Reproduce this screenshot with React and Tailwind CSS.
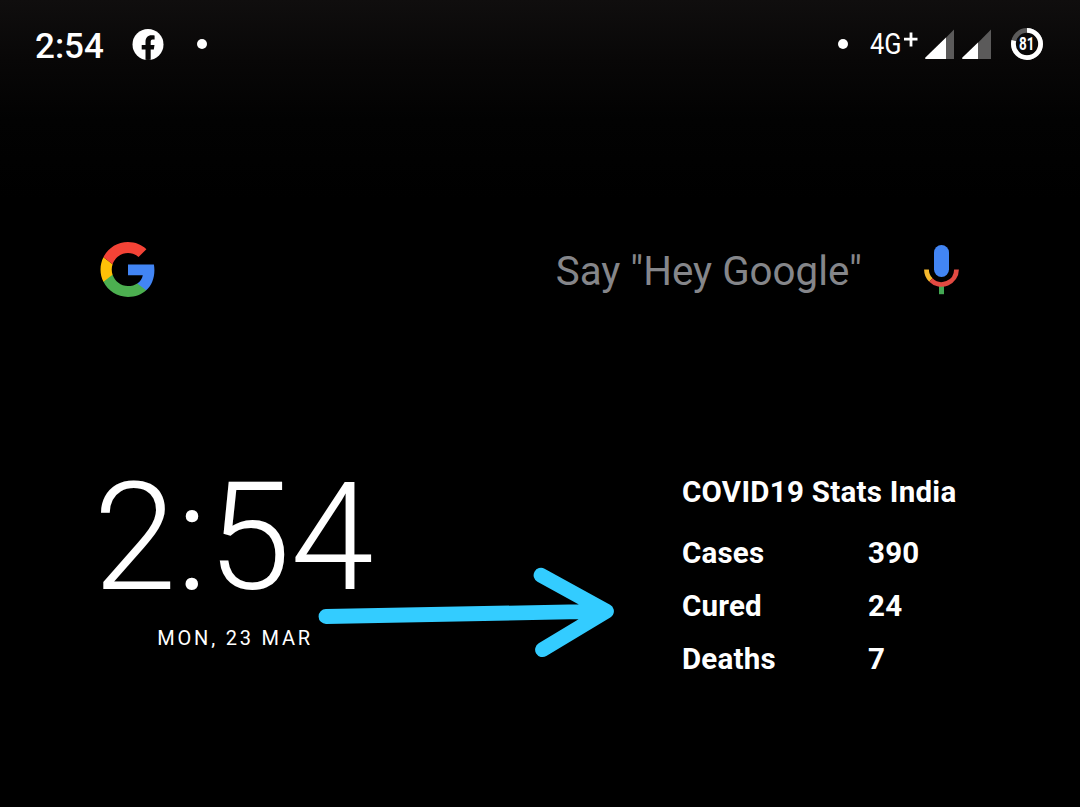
import React from "react";

const stats = [
  ["Cases", "390"],
  ["Cured", "24"],
  ["Deaths", "7"],
];

function FacebookBadge() {
  return (
    <svg className="h-8 w-8" viewBox="0 0 32 32">
      <defs>
        <clipPath id="badge">
          <circle cx="16" cy="16.5" r="15.5" />
        </clipPath>
      </defs>
      <circle cx="16" cy="16.5" r="15.5" fill="#fff" />
      <path
        clipPath="url(#badge)"
        d="M13.5 32V21.6H9.7V17.1H13.5V13.8C13.5 9.6 15.7 7.2 19.6 7.2C20.8 7.2 21.8 7.3 22.6 7.5V11.4H20.6C19 11.4 18.7 12.4 18.7 13.7V17.1H22.5L21.8 21.6H18.7V32Z"
        fill="#0a0909"
      />
    </svg>
  );
}

function Signal({ level }) {
  return (
    <svg className="h-[30px] w-[30px]" viewBox="0 0 30 30">
      <path d="M29 0.4V30H0Z" fill="#5b5a5a" />
      <path
        d={`M${level} ${29.6 - level}V30H1.2Q-0.6 29.8 0.4 28.6Z`}
        fill="#fff"
      />
    </svg>
  );
}

function Battery() {
  return (
    <svg className="h-8 w-8" viewBox="0 0 32 32">
      <circle cx="16" cy="16" r="13.6" fill="none" stroke="#5b5a5a" strokeWidth="4.8" />
      <circle
        cx="16"
        cy="16"
        r="13.6"
        fill="none"
        stroke="#fff"
        strokeWidth="4.8"
        pathLength="100"
        strokeDasharray="79 21"
        transform="rotate(-90 16 16)"
      />
      <text x="15.8" y="22.2" textAnchor="middle" textLength="15.5" lengthAdjust="spacingAndGlyphs" fontSize="17.5" fontWeight="700" fill="#fff">
        81
      </text>
    </svg>
  );
}

function StatusBar() {
  return (
    <header className="flex h-[88px] items-center justify-between pl-[35px] pr-[37px]">
      <div className="flex items-center">
        <span className="w-[97px] pt-[5px] text-[35px] leading-none font-medium">2:54</span>
        <FacebookBadge />
        <span className="ml-[33px] h-[10px] w-[10px] rounded-full bg-white" />
      </div>
      <div className="flex items-center">
        <span className="mr-[22px] h-[10px] w-[10px] rounded-full bg-white" />
        <svg className="mr-[6px] h-8 w-[49px]" viewBox="0 0 49 32">
          <text x="0" y="25.8" textLength="31.5" lengthAdjust="spacingAndGlyphs" fontSize="29.5" fill="#fff">
            4G
          </text>
          <path d="M41 4.5V18.5M34 11.2H47.5" stroke="#fff" strokeWidth="2.8" />
        </svg>
        <Signal level={21} />
        <span className="w-[7px]" />
        <Signal level={16} />
        <span className="w-[19px]" />
        <Battery />
      </div>
    </header>
  );
}

function GoogleLogo() {
  return (
    <svg className="h-[60px] w-[60px]" viewBox="0 0.2 24 24">
      <path fill="#4285F4" d="M22.56 12.25c0-.78-.07-1.53-.2-2.25H12v4.26h5.92c-.26 1.37-1.04 2.53-2.21 3.31v2.77h3.57c2.08-1.92 3.28-4.74 3.28-8.09z" />
      <path fill="#4CAF50" d="M12 23c2.97 0 5.46-.98 7.28-2.66l-3.57-2.77c-.98.66-2.23 1.06-3.71 1.06-2.86 0-5.29-1.93-6.16-4.53H2.18v2.84C3.99 20.53 7.7 23 12 23z" />
      <path fill="#FFC107" d="M5.84 14.09c-.22-.66-.35-1.36-.35-2.09s.13-1.43.35-2.09L2.18 7.07C1.43 8.55 1 10.22 1 12s.43 3.45 1.18 4.93l2.85-2.22.81-.62z" />
      <path fill="#F44336" d="M12 5.38c1.62 0 3.06.56 4.21 1.64l3.15-3.15C17.45 2.09 14.97 1 12 1 7.7 1 3.99 3.47 2.18 7.07l3.66 2.84c.87-2.6 3.3-4.53 6.16-4.53z" />
    </svg>
  );
}

function Mic() {
  return (
    <svg className="h-[50px] w-[36px]" viewBox="0 0 36 50">
      <path d="M17.5 40V49.2" stroke="#43A853" strokeWidth="5" />
      <path d="M2.5 24.4A15 15 0 0 0 6.9 35" fill="none" stroke="#F5B92E" strokeWidth="4.8" />
      <path d="M6.9 35A15 15 0 0 0 32.5 24.4" fill="none" stroke="#E24A42" strokeWidth="4.8" />
      <rect x="10" y="0" width="15" height="32" rx="7.5" fill="#4285F4" />
    </svg>
  );
}

function SearchBar() {
  return (
    <div className="flex h-[60px] items-center pr-[120px] pl-[98.4px]">
      <GoogleLogo />
      <span className="ml-auto pt-[4px] text-[40.3px] leading-none whitespace-nowrap text-[#85868a]">
        Say "Hey Google"
      </span>
      <span className="ml-[62px]">
        <Mic />
      </span>
    </div>
  );
}

export default function App() {
  return (
    <div className="flex h-[807px] w-[1080px] flex-col overflow-hidden bg-black bg-[linear-gradient(to_bottom,#100e0e_0px,#080707_60px,#020202_120px,#000_200px)] font-[Roboto,sans-serif] text-white">
      <StatusBar />
      <div className="mt-[152px]">
        <SearchBar />
      </div>
      <main className="mt-[160px] flex">
        <section className="w-[682px] pt-[3px] pl-[93.3px]">
          <div className="text-[150px] leading-[150px] font-light tracking-[-0.2px]">2:54</div>
          <div className="mt-[13px] pl-[64px] text-[20px] leading-[24px] tracking-[2.8px]">MON, 23 MAR</div>
        </section>
        <section className="pt-[14px] text-[29.5px] leading-[36px] font-bold">
          <h2 className="whitespace-nowrap tracking-[0.27px]">COVID19 Stats India</h2>
          <dl className="mt-[25px] grid grid-cols-[186px_auto] gap-y-[17px] tracking-[0.2px]">
            {stats.map(([label, value]) => (
              <React.Fragment key={label}>
                <dt>{label}</dt>
                <dd>{value}</dd>
              </React.Fragment>
            ))}
          </dl>
        </section>
      </main>
      <svg className="absolute top-[560px] left-[310px] h-[104px] w-[312px]" viewBox="310 560 312 104">
        <path
          d="M326 616.5L606 611.2M541 575.2L606.5 611.2L542.5 649.7"
          fill="none"
          stroke="#33CCFF"
          strokeWidth="14.8"
          strokeLinecap="round"
          strokeLinejoin="round"
        />
      </svg>
    </div>
  );
}
